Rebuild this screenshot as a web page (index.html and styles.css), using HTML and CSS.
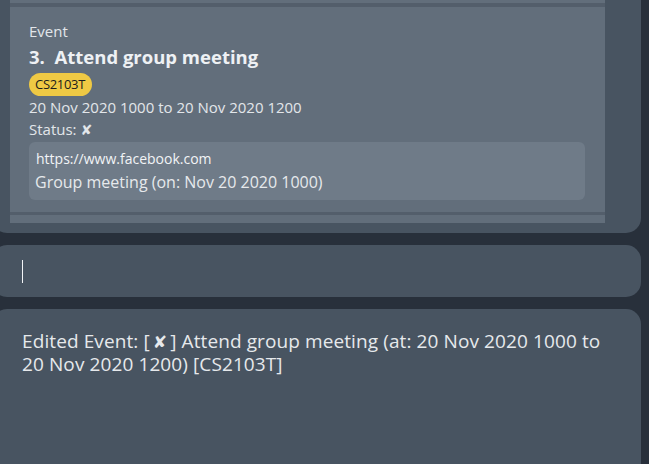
FILE: index.html
```html
<!DOCTYPE html>
<html>
<head>
<meta charset="utf-8">
<link rel="stylesheet" href="styles.css">
</head>
<body>
<div class="app">
  <section class="list-panel">
    <div class="list">
      <div class="cell-stub top"></div>
      <div class="cell-sep"></div>
      <div class="card">
        <div class="card-type">Event</div>
        <div class="card-title">3.&nbsp;&nbsp;Attend group meeting</div>
        <div class="tags"><span class="tag">CS2103T</span></div>
        <div class="card-line">20 Nov 2020 1000 to 20 Nov 2020 1200</div>
        <div class="card-line status">Status: <span class="cross">✘</span></div>
        <div class="notes">
          <div class="note-url">https://www.facebook.com</div>
          <div class="note-text">Group meeting (on: Nov 20 2020 1000)</div>
        </div>
      </div>
      <div class="cell-sep bottom"></div>
      <div class="cell-stub"></div>
    </div>
  </section>
  <section class="command-box">
    <span class="caret"></span>
  </section>
  <section class="result-box">
    <p class="result-text">Edited Event: [<span class="cross wide">✘</span>] Attend group meeting (at: 20 Nov 2020 1000 to 20 Nov 2020 1200) [CS2103T]</p>
  </section>
</div>
</body>
</html>
```
FILE: styles.css
```css
html, body {
  margin: 0;
  padding: 0;
  height: 100%;
  overflow: hidden;
}
body {
  background: #28303b;
  font-family: "Open Sans", "DejaVu Sans", sans-serif;
  color: #e4e8ec;
}
.app {
  display: flex;
  flex-direction: column;
  gap: 12px;
  margin-left: -8px;
  width: 649px;
  height: 100%;
}
.list-panel {
  background: #485461;
  border-radius: 0 0 15px 15px;
  padding: 0 36px 10px 18px;
}
.list {
  display: flex;
  flex-direction: column;
}
.cell-stub {
  height: 8px;
  background: #626e7b;
}
.cell-stub.top {
  height: 3px;
}
.cell-sep {
  height: 4px;
  background: #535e6b;
}
.cell-sep.bottom {
  height: 3px;
}
.card {
  background: #626e7b;
  height: 205px;
  box-sizing: border-box;
  padding: 14px 20px 0 19px;
  display: flex;
  flex-direction: column;
}
.card-type {
  font-size: 15px;
  line-height: 20px;
  color: #e2e6ea;
}
.card-title {
  font-size: 18.5px;
  font-weight: 700;
  line-height: 26px;
  color: #eef1f4;
  margin-top: 3px;
}
.tags {
  display: flex;
  margin-top: 3px;
}
.tag {
  background: #efc944;
  color: #1c1c1c;
  font-size: 13px;
  line-height: 23px;
  padding: 0 7px 0 6px;
  border-radius: 12px;
  letter-spacing: -0.3px;
}
.card-line {
  font-size: 15px;
  line-height: 22px;
  color: #e2e6ea;
}
.cross {
  font-family: "DejaVu Sans", sans-serif;
  font-weight: 700;
  font-size: 0.95em;
}
.cross.wide {
  margin: 0 3px;
  font-size: 0.9em;
}
.notes {
  margin-top: 1px;
  background: #6f7b88;
  border-radius: 6px;
  padding: 6px 8px 6px 6px;
  display: flex;
  flex-direction: column;
}
.note-url {
  font-size: 14px;
  line-height: 22px;
  color: #f2f4f6;
  padding-left: 1px;
}
.note-text {
  font-size: 16px;
  line-height: 24px;
  color: #e6e9ec;
}
.command-box {
  background: #485461;
  border-radius: 15px;
  height: 52px;
  flex: none;
  display: flex;
  align-items: center;
  padding-left: 30px;
}
.caret {
  width: 1px;
  height: 23px;
  background: #f2f4f6;
}
.result-box {
  background: #485461;
  border-radius: 15px 15px 0 0;
  flex: 1;
  padding: 21px 36px 0 30px;
}
.result-text {
  margin: 0;
  font-size: 19px;
  letter-spacing: 0.1px;
  line-height: 22px;
  color: #e6e9ec;
}
```
